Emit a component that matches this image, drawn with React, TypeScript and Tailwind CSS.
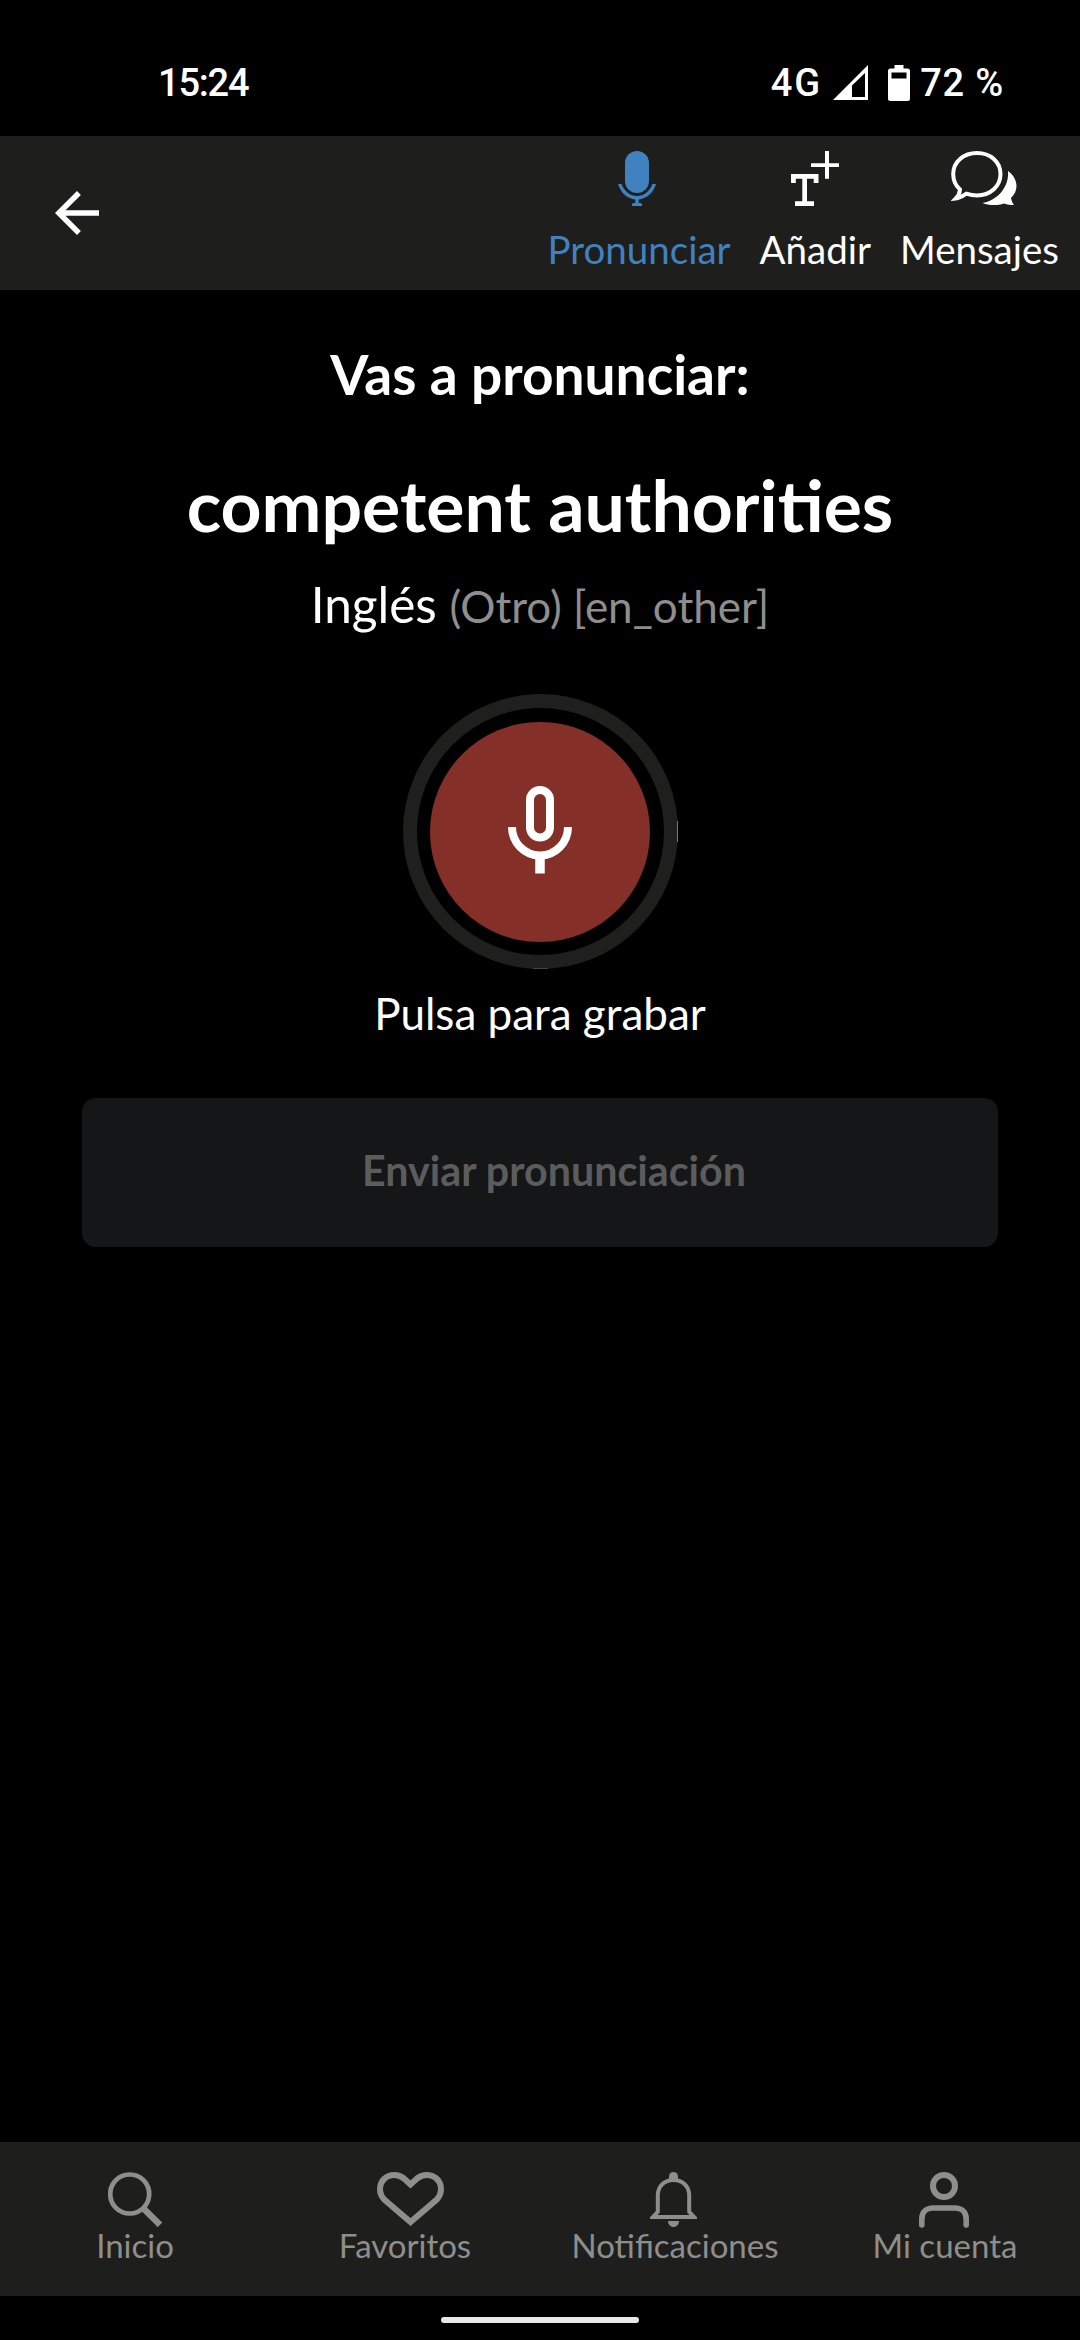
import React from 'react';
import { clsx } from 'clsx';

interface ActionItem {
  id: string;
  label: string;
  icon: React.ReactNode;
  active?: boolean;
}

const SignalIcon = () => (
  <svg width="35" height="35" viewBox="0 0 35 35" fill="currentColor">
    <path fillRule="evenodd" d="M35 0V35H0ZM32 8L19 20.5V32H32Z" />
  </svg>
);

const BatteryIcon = () => (
  <svg width="22" height="36" viewBox="0 0 22 36" fill="currentColor">
    <path
      fillRule="evenodd"
      d="M6.500 0H15.500V3.500H19.500A2.500 2.500 0 0 1 22 6V33.500A2.500 2.500 0 0 1 19.500 36H2.500A2.500 2.500 0 0 1 0 33.500V6A2.500 2.500 0 0 1 2.500 3.500H6.500ZM3.500 7.500V13.500H18.500V7.500Z"
    />
  </svg>
);

const BackIcon = () => (
  <svg width="66" height="66" viewBox="0 0 24 24" fill="currentColor">
    <path d="M20 11H7.830l5.590-5.590L12 4l-8 8 8 8 1.410-1.410L7.830 13H20v-2z" />
  </svg>
);

const MicSolidIcon = () => (
  <svg className="mr-1" width="38" height="55" viewBox="0 0 38 55" fill="currentColor">
    <rect x="7" y="0" width="24" height="42" rx="12" />
    <path d="M0 33H3.500C6.500 40.500 12 45 19 45S31.500 40.500 34.500 33H38C35.500 41.500 29 47.500 20.700 48.500V52H22.500A1.500 1.500 0 0 1 24 53.500V55H14V53.500A1.500 1.500 0 0 1 15.500 52H17.300V48.500C9 47.500 2.500 41.500 0 33Z" />
  </svg>
);

const TextPlusIcon = () => (
  <svg width="48" height="55" viewBox="0 0 48 55" fill="currentColor">
    <path d="M0 23H27.500V32H22.700V27.800H16V50.300H23V55H4V50.300H11.300V27.800H4.800V32H0Z" />
    <path d="M34 0H38V12.200H48V16H38V27.800H34V16H20V12.200H34Z" />
  </svg>
);

const ChatIcon = () => (
  <svg className="ml-[10px]" width="66" height="55" viewBox="0 0 66 55">
    <path
      d="M26 2C39.500 2 49.500 11 49.500 23S39.500 44.500 26 44.500C22 44.500 18.500 43.700 15.300 42.600C12 44.800 8.500 47.200 4.800 47.500C7.300 45 8.700 42 9 38.600C4.800 34.800 2.200 29.200 2.200 23C2.200 11 12.500 2 26 2Z"
      fill="none"
      stroke="currentColor"
      strokeWidth="4"
    />
    <path
      d="M57 20C62.500 24 65.500 29.500 65.500 35C65.500 39.500 63.500 43.500 60 47C60.500 50 61.500 52 63 54C59.500 54 56 53.500 53 52.500C46 54.800 37.500 54.500 31.500 52C45 50 58.500 37 57 20Z"
      fill="currentColor"
    />
  </svg>
);

const MicOutlineIcon = () => (
  <svg width="64" height="88" viewBox="0 0 64 88" fill="none" stroke="#fff" strokeWidth="8">
    <rect x="22" y="4" width="20" height="47.500" rx="10" />
    <path d="M4 41A28 28.500 0 0 0 60 41" />
    <path d="M32 70V87.500" strokeWidth="9.500" />
  </svg>
);

const SearchIcon = () => (
  <svg width="55" height="55" viewBox="0 0 55 55" fill="none" stroke="currentColor">
    <circle cx="21.700" cy="22" r="19.500" strokeWidth="4.700" />
    <path d="M35 36L52 52.800" strokeWidth="6.500" />
  </svg>
);

const HeartIcon = () => (
  <svg className="ml-[11px]" width="67" height="55" viewBox="0 0 67 55" fill="none">
    <path
      d="M33.500 12.500L27 6.500C23.500 3.800 20.500 3 17.500 3C9 3 3 9 3 17C3 21.500 4.800 25 7.500 27.800L33.500 50L59.500 27.800C62.200 25 64 21.500 64 17C64 9 58 3 49.500 3C46.500 3 43.500 3.800 40 6.500Z"
      stroke="currentColor"
      strokeWidth="6"
    />
  </svg>
);

const BellIcon = () => (
  <svg className="mr-[3px]" width="47" height="55" viewBox="0 0 47 55">
    <path
      d="M7.800 39.800V23.500C7.800 14 14.500 8 23.500 8S39.200 14 39.200 23.500V39.800L44 45H3Z"
      fill="none"
      stroke="currentColor"
      strokeWidth="4"
    />
    <path d="M19 8V4.500A4.500 4.500 0 0 1 28 4.500V8Z" fill="currentColor" />
    <path d="M18 49H29C29 52.500 26.500 55 23.500 55S18 52.500 18 49Z" fill="currentColor" />
  </svg>
);

const UserIcon = () => (
  <svg
    className="mr-[3px]"
    width="50"
    height="56"
    viewBox="0 0 50 56"
    fill="none"
    stroke="currentColor"
    strokeLinecap="round"
  >
    <circle cx="25" cy="14" r="11" strokeWidth="6" />
    <path d="M2.800 53V47C2.800 40 7.500 36 14 36H36C42.500 36 47.200 40 47.200 47V53" strokeWidth="5.600" />
  </svg>
);

const headerActions: ActionItem[] = [
  { id: 'pronounce', label: 'Pronunciar', icon: <MicSolidIcon />, active: true },
  { id: 'add', label: 'Añadir', icon: <TextPlusIcon /> },
  { id: 'messages', label: 'Mensajes', icon: <ChatIcon /> },
];

const navItems: ActionItem[] = [
  { id: 'home', label: 'Inicio', icon: <SearchIcon /> },
  { id: 'favorites', label: 'Favoritos', icon: <HeartIcon /> },
  { id: 'notifications', label: 'Notificaciones', icon: <BellIcon /> },
  { id: 'account', label: 'Mi cuenta', icon: <UserIcon /> },
];

const StatusBar = () => (
  <div className="flex h-[136px] items-center justify-between pt-[29px] pr-[76px] pl-[158px] font-[Roboto,sans-serif] text-[38px] leading-[46px] font-medium">
    <span className="tracking-[-1.2px]">15:24</span>
    <div className="flex items-center">
      <span className="tracking-[2px]">4G</span>
      <span className="ml-[11px]">
        <SignalIcon />
      </span>
      <span className="ml-[20px]">
        <BatteryIcon />
      </span>
      <span className="ml-[10px] tracking-[0.8px]">72 %</span>
    </div>
  </div>
);

const Header = () => (
  <header className="flex h-[154px] items-center justify-between bg-[#1e1e1c] pr-[21px] pl-[44px]">
    <button type="button" aria-label="Volver">
      <BackIcon />
    </button>
    <div className="flex h-full gap-[29px] pt-[15px]">
      {headerActions.map((item) => (
        <button
          key={item.id}
          type="button"
          className={clsx('flex flex-col items-center', item.active ? 'text-[#4082c0]' : 'text-white')}
        >
          {item.icon}
          <span className="mt-[20px] text-[38.5px] leading-[46px]">{item.label}</span>
        </button>
      ))}
    </div>
  </header>
);

const RecordButton = () => (
  <button
    type="button"
    aria-label="Grabar"
    className="relative mt-[60px] flex size-[275px] items-center justify-center rounded-full border-[14px] border-[#1f1f1d]"
  >
    <span className="flex size-[220px] items-center justify-center rounded-full bg-[#842f27] pb-1">
      <MicOutlineIcon />
    </span>
    {/* highlight on the right and bottom edges */}
    <span className="absolute top-[113px] -right-[14px] h-[21px] w-px bg-[#777]" />
    <span className="absolute -bottom-[14px] left-[116px] h-px w-[15px] bg-[#444]" />
  </button>
);

const BottomNav = () => (
  <nav className="grid h-[154px] grid-cols-4 bg-[#1e1e1c] pt-[30px] text-[#8e8e8c]">
    {navItems.map((item) => (
      <button key={item.id} type="button" className="flex flex-col items-center">
        <span className="flex h-[53px] justify-center">{item.icon}</span>
        <span className="text-[33px] leading-[40px]">{item.label}</span>
      </button>
    ))}
  </nav>
);

export default function App() {
  return (
    <div className="flex h-[2340px] w-[1080px] flex-col overflow-hidden bg-black font-[Lato,sans-serif] text-white">
      <StatusBar />
      <Header />

      <main className="flex flex-1 flex-col items-center px-[82px] pt-[51px]">
        <h2 className="text-[55px] leading-[66px] font-bold">Vas a pronunciar:</h2>
        <h1 className="mt-[54px] text-[71.5px] leading-[86px] font-bold">competent authorities</h1>
        <p className="mt-[27px] text-[49.5px] leading-[60px]">
          Inglés <span className="text-[44px] leading-none text-[#8e8e8c]">(Otro) [en_other]</span>
        </p>
        <RecordButton />
        <p className="mt-[18px] text-[44px] leading-[52px]">Pulsa para grabar</p>
        <button
          type="button"
          disabled
          className="mt-[59px] h-[149px] w-full rounded-[14px] bg-[#141618] pb-[3px] pl-[28px] text-[41.25px] font-bold text-[#5c5c5c]"
        >
          Enviar pronunciación
        </button>
      </main>

      <BottomNav />
      <div className="flex h-[44px] justify-center pt-[21px]">
        <div className="h-[6px] w-[198px] rounded-full bg-[#e8e7e9]" />
      </div>
    </div>
  );
}
